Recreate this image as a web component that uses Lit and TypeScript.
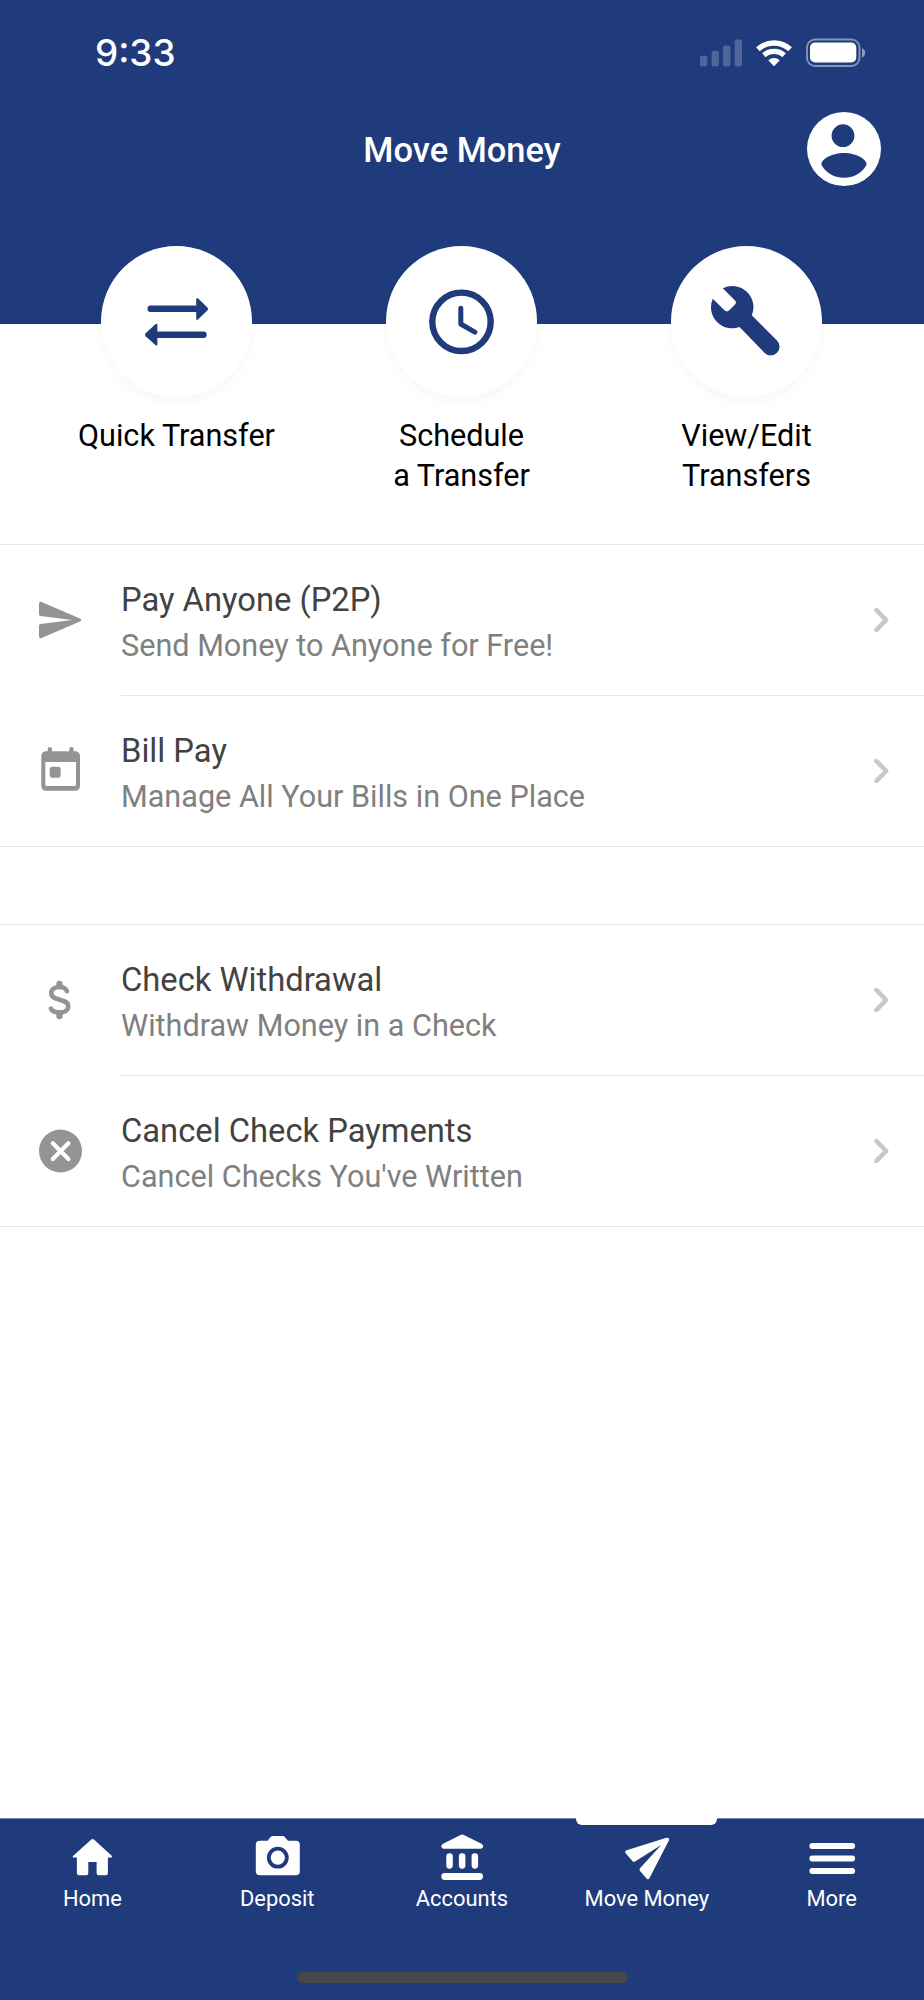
import { LitElement, html, css, svg, SVGTemplateResult } from "lit";
import { customElement } from "lit/decorators.js";
import { classMap } from "lit/directives/class-map.js";

interface Action { lines: string[]; icon: SVGTemplateResult }
interface Row { title: string; sub: string; icon: SVGTemplateResult }
interface Tab { label: string; icon: SVGTemplateResult; active?: boolean }

const actions: Action[] = [
  {
    lines: ["Quick Transfer"],
    icon: svg`
      <path class="line" stroke-width="6.400" d="M49.700 62.800H97M102.500 88.800H54"/>
      <path d="M95.200 53.500Q95.200 51 97.200 52.600L106.400 61.400Q107.800 62.900 106.400 64.400L97.200 73.300Q95.200 75 95.200 72.500Z"/>
      <path d="M56.400 79.200Q56.400 76.700 54.400 78.300L44.600 87.200Q43.200 88.700 44.600 90.200L54.400 99.100Q56.400 100.700 56.400 98.200Z"/>`,
  },
  {
    lines: ["Schedule", "a Transfer"],
    icon: svg`
      <circle class="line" cx="75.500" cy="75.800" r="29.200" stroke-width="6.400"/>
      <path class="line" stroke-width="5" d="M74.800 62.200V78L88.800 86.200"/>`,
  },
  {
    lines: ["View/Edit", "Transfers"],
    icon: svg`<path d="M51.800 42.300A21.100 21.100 0 0 1 80.800 69.300L106 94.500A8.700 8.700 0 0 1 93.700 106.900L68.500 81A21.100 21.100 0 0 1 41.800 52.700L53.500 64.300Q56 66.500 58.300 64.300L63.800 58.800Q66 56.500 63.800 54.300Z"/>`,
  },
];

const payRows: Row[] = [
  {
    title: "Pay Anyone (P2P)",
    sub: "Send Money to Anyone for Free!",
    icon: svg`<path d="M39 58.700Q39 56 41.600 57L80 73.400Q82.600 75 80 76.600L41.600 93Q39 94 39 91.300V80.800Q39 79.200 40.600 79L72 75L40.600 71Q39 70.800 39 69.200Z"/>`,
  },
  {
    title: "Bill Pay",
    sub: "Manage All Your Bills in One Place",
    icon: svg`
      <path fill-rule="evenodd" d="M45.800 55.300H75.500A4.500 4.500 0 0 1 80 59.800V90.200A4.500 4.500 0 0 1 75.500 94.700H45.800A4.500 4.500 0 0 1 41.300 90.200V59.800A4.500 4.500 0 0 1 45.800 55.300ZM45.300 66V88.500A1.500 1.500 0 0 0 46.800 90H74.500A1.500 1.500 0 0 0 76 88.500V66Z"/>
      <rect x="47.700" y="51" width="4.300" height="8" rx="2.100"/>
      <rect x="69.300" y="51" width="4.300" height="8" rx="2.100"/>
      <rect x="49.700" y="70.700" width="11" height="11" rx="2.600"/>`,
  },
];

const checkRows: Row[] = [
  {
    title: "Check Withdrawal",
    sub: "Withdraw Money in a Check",
    icon: svg`
      <path class="line" stroke-width="4.600" d="M67 66.200C65.800 63.500 63 62 59.600 62C54.800 62 51.200 64.400 51.200 68C51.200 77 68.200 72.300 68.200 81.200C68.200 85.300 64.500 87.400 59.800 87.400C55.500 87.400 52 86.200 50.900 83.600"/>
      <path class="line" stroke-width="6.400" d="M59.500 58.900V61M59.500 89.500V91.100"/>`,
  },
  {
    title: "Cancel Check Payments",
    sub: "Cancel Checks You've Written",
    icon: svg`
      <circle cx="60.500" cy="75" r="21.500"/>
      <path class="cross" d="M52.800 67.300L68.400 82.900M68.400 67.300L52.800 82.900"/>`,
  },
];

const tabs: Tab[] = [
  {
    label: "Home",
    icon: svg`<path d="M29 9.800Q30.600 8.300 32.200 9.800L50 25.900Q51 27.300 49.300 27.500H45.900V43.300Q45.900 45.300 43.900 45.300H36.600Q34.600 45.300 34.600 43.300V32H26.300V43.300Q26.300 45.300 24.300 45.300H16.900Q14.900 45.300 14.900 43.300V27.500H11.500Q10 27.300 11 25.900Z"/>`,
  },
  {
    label: "Deposit",
    icon: svg`
      <path fill-rule="evenodd" d="M12.800 10.700H20.500L23.600 7Q24.500 6 25.800 6H35.600Q36.900 6 37.800 7L41 10.700H48.800A4 4 0 0 1 52.800 14.700V41.300A4 4 0 0 1 48.800 45.300H12.800A4 4 0 0 1 8.800 41.300V14.700A4 4 0 0 1 12.800 10.700ZM30.800 16.800A10.900 10.900 0 1 0 30.800 38.600A10.900 10.900 0 1 0 30.800 16.800Z"/>
      <circle cx="30.800" cy="27.700" r="7.100"/>`,
  },
  {
    label: "Accounts",
    icon: svg`
      <path d="M28.500 4.900Q30.200 4 31.900 4.900L49.500 13.700Q51.200 14.700 51.200 16.300Q51.200 18.700 48.800 18.700H11.700Q9.300 18.700 9.300 16.300Q9.300 14.700 11 13.700Z"/>
      <rect x="14.300" y="23.300" width="6.500" height="15.400" rx="3.100"/>
      <rect x="26.900" y="23.300" width="6.500" height="15.400" rx="3.100"/>
      <rect x="39.600" y="23.300" width="6.500" height="15.400" rx="3.100"/>
      <rect x="9.300" y="43" width="41.700" height="7" rx="3.400"/>`,
  },
  {
    label: "Move Money",
    active: true,
    icon: svg`<path d="M49.500 7.800Q52.600 7 52 10.300L32.400 48.200Q31.200 50 29.800 48.700L23 41Q22 39.500 23 38.200L44.200 15L18 31.600Q16.700 32.400 15.600 31.200L8.600 23.300Q7.300 21 9.600 20.200Z"/>`,
  },
  {
    label: "More",
    icon: svg`<path class="bars" d="M10.300 16H50.200M10.300 28.500H50.200M10.300 41H50.200"/>`,
  },
];

@customElement("app-root")
export class AppRoot extends LitElement {
  static styles = css`
    :host {
      --navy: #1f3b7b;
      display: flex;
      flex-direction: column;
      height: 2000px;
      background: #fff;
      font-family: Roboto, sans-serif;
      color: #000;
    }
    svg { display: block; fill: currentColor; }
    .line { fill: none; stroke: currentColor; stroke-linecap: round; stroke-linejoin: round; }
    .header { height: 324px; flex: none; background: var(--navy); color: #fff; }
    .status {
      height: 106px; box-sizing: border-box; padding: 0 58px 0 95px;
      display: flex; align-items: center; justify-content: space-between;
    }
    .time { font: 500 36.840px/44px Inter, sans-serif; }
    .nav {
      height: 86px; padding: 0 43px;
      display: grid; grid-template-columns: 74px 1fr 74px; align-items: center;
    }
    .nav h1 {
      grid-column: 2; margin: 0; text-align: center;
      font-weight: 500; font-size: 34.470px; line-height: 42px; padding-top: 2px;
    }
    .actions {
      position: relative; flex: none; box-sizing: border-box;
      height: 298px; margin-top: -78px; padding: 0 35px 0 34px;
      display: grid; grid-template-columns: repeat(3, 1fr); justify-items: center; align-items: start;
    }
    .action { display: flex; flex-direction: column; align-items: center; gap: 19px; }
    .disc {
      width: 151px; height: 151px; border-radius: 50%; background: #fff;
      color: var(--navy); box-shadow: 0 6px 12px rgba(0, 0, 0, 0.03);
    }
    .label { font-size: 30.600px; line-height: 40px; text-align: center; }
    .list { flex: none; border-top: 1px solid #e6e6e6; }
    .list + .list { margin-top: 77px; }
    .row { display: flex; height: 151px; }
    .lead { color: #949494; width: 121px; flex: none; }
    .cross { fill: none; stroke: #fff; stroke-width: 4.200; stroke-linecap: round; }
    .body {
      flex: 1; box-sizing: border-box; border-bottom: 1px solid #e6e6e6;
      display: flex; justify-content: space-between; align-items: center; padding-right: 34px;
    }
    .row:last-child { border-bottom: 1px solid #e6e6e6; box-sizing: border-box; }
    .row:last-child .body { border-bottom: 0; }
    .text { align-self: flex-start; padding-top: 32px; }
    .title { font-size: 32.720px; line-height: 46px; color: #424242; }
    .sub { font-size: 30.600px; line-height: 45px; color: #808080; }
    .chev { color: #c8c8c8; }
    .fill { flex: 1; }
    .tabbar {
      flex: none; height: 182px; box-sizing: border-box; background: var(--navy); color: #fff;
      border-top: 1px solid #7385ae; display: flex; flex-direction: column;
    }
    .tabs { display: grid; grid-template-columns: repeat(5, 1fr); }
    .tab {
      position: relative; display: flex; flex-direction: column; align-items: center;
      padding-top: 11px; font-size: 21.900px; line-height: 29px;
    }
    .tab.active::before {
      content: ""; position: absolute; top: -1px; left: 50%; width: 141px; height: 7px;
      margin-left: -70.500px; background: #fff; border-radius: 0 0 6px 6px;
    }
    .bars { fill: none; stroke: currentColor; stroke-width: 5.800; stroke-linecap: round; }
    .grip { width: 331px; height: 11px; border-radius: 6px; background: #474747; margin: auto auto 17px; }
  `;

  private list(rows: Row[]) {
    return html`<div class="list">
      ${rows.map(
        (r) => html`<div class="row">
          <svg class="lead" width="121" height="150" viewBox="0 0 121 150">${r.icon}</svg>
          <div class="body">
            <div class="text">
              <div class="title">${r.title}</div>
              <div class="sub">${r.sub}</div>
            </div>
            <svg class="chev" width="18" height="30" viewBox="0 0 18 30">
              <path class="line" stroke-width="4.600" d="M4.400 5.100L14.200 15L4.400 24.900"/>
            </svg>
          </div>
        </div>`
      )}
    </div>`;
  }

  render() {
    return html`
      <div class="header">
        <div class="status">
          <div class="time">9:33</div>
          <svg width="166" height="30" viewBox="700 37.500 166 30">
            <g opacity="0.22">
              <rect x="700" y="55.300" width="7.300" height="10.700" rx="2"/>
              <rect x="711.600" y="50.300" width="7.300" height="15.700" rx="2"/>
              <rect x="723.100" y="45" width="7.300" height="21" rx="2"/>
              <rect x="734.700" y="39" width="7.300" height="27" rx="2"/>
            </g>
            <path fill="none" stroke="currentColor" stroke-width="5.400" d="M757.900 48.800A23.800 23.800 0 0 1 790.100 48.800"/>
            <path fill="none" stroke="currentColor" stroke-width="5.200" d="M763.900 54.700A15.300 15.300 0 0 1 784.100 54.700"/>
            <path d="M768.300 59.700A8.700 8.700 0 0 1 779.700 59.700L774.600 65.200Q774 65.900 773.400 65.200Z"/>
            <rect x="807" y="39" width="52.500" height="26.500" rx="8" fill="none" stroke="currentColor" stroke-width="1.900" opacity="0.45"/>
            <rect x="810" y="42" width="46.300" height="20" rx="5"/>
            <path d="M862 47.700Q865.200 49 865.200 52.300Q865.200 55.600 862 57Z" opacity="0.5"/>
          </svg>
        </div>
        <div class="nav">
          <h1>Move Money</h1>
          <svg width="74" height="74" viewBox="0 0 74 74">
            <path fill-rule="evenodd" d="M37 0A37 37 0 1 1 37 74A37 37 0 1 1 37 0ZM36 12.300A11.400 11.400 0 1 0 36 35.100A11.400 11.400 0 1 0 36 12.300ZM37 41C26 41 14.400 46.500 14.400 52.400C17.500 59.500 26 65.800 37 65.800C48 65.800 56.500 59.500 59.600 52.400C59.600 46.500 48 41 37 41Z"/>
          </svg>
        </div>
      </div>
      <div class="actions">
        ${actions.map(
          (a) => html`<div class="action">
            <div class="disc"><svg width="151" height="151" viewBox="0 0 151 151">${a.icon}</svg></div>
            <div class="label">${a.lines.map((l) => html`<div>${l}</div>`)}</div>
          </div>`
        )}
      </div>
      ${this.list(payRows)} ${this.list(checkRows)}
      <div class="fill"></div>
      <div class="tabbar">
        <div class="tabs">
          ${tabs.map(
            (t) => html`<div class=${classMap({ tab: true, active: !!t.active })}>
              <svg width="60" height="54" viewBox="0 0 60 54">${t.icon}</svg>
              <div>${t.label}</div>
            </div>`
          )}
        </div>
        <div class="grip"></div>
      </div>
    `;
  }
}
